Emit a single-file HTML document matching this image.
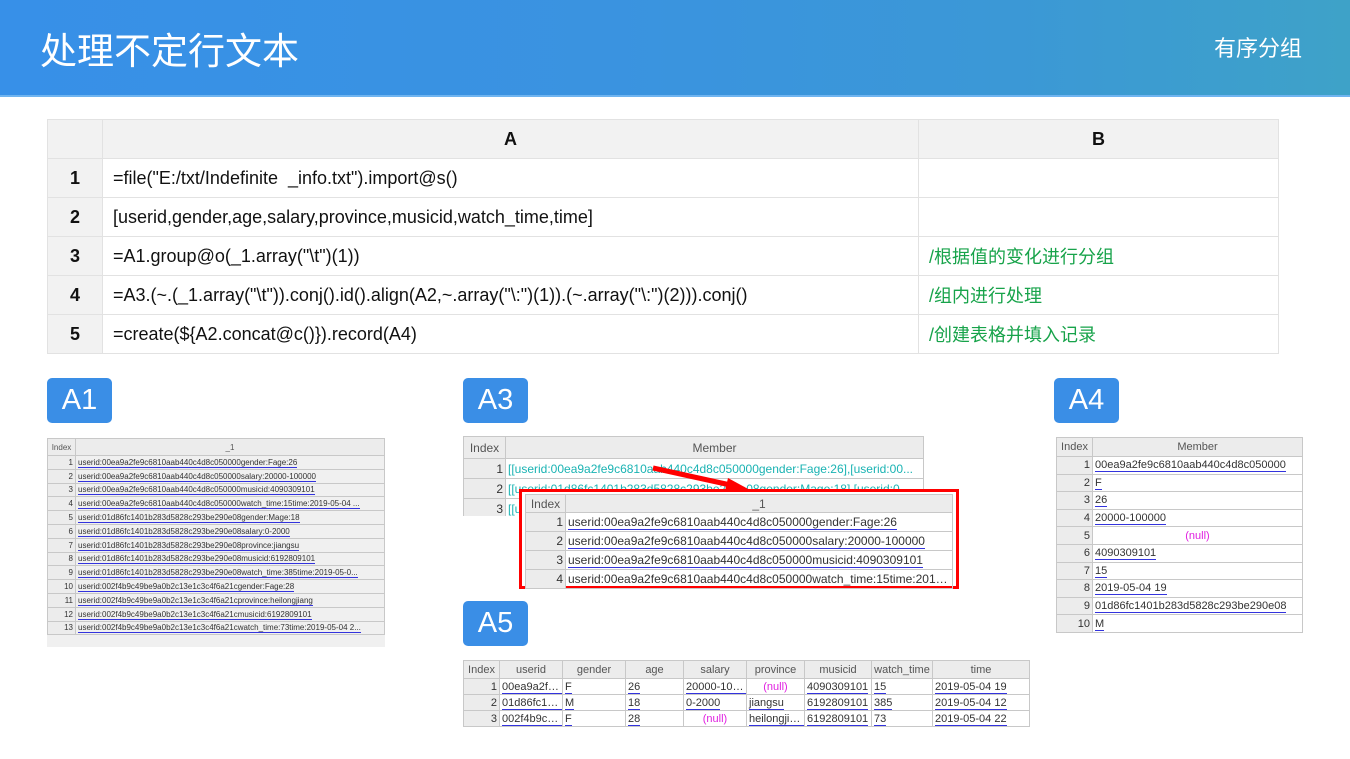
<!DOCTYPE html>
<html><head><meta charset="utf-8"><style>
*{margin:0;padding:0;box-sizing:border-box}
body{width:1350px;height:759px;background:#fff;position:relative;overflow:hidden;font-family:"Liberation Sans","Noto Sans CJK SC",sans-serif}
.hdr{position:absolute;left:0;top:0;width:1350px;height:97px;background:linear-gradient(90deg,#3790e8 0%,#3a93e0 45%,#3b98d6 75%,#3ea2c8 100%)}
.hdr .bar{position:absolute;left:0;bottom:0;width:100%;height:2px;background:#6fb4f0}
.t1{position:absolute;left:40px;top:21px;color:#fff;font-size:37px}
.t2{position:absolute;left:1214px;top:31px;color:#fff;font-size:22px}
table{border-collapse:collapse;position:absolute;table-layout:fixed}
.main td{border:1px solid #e2e2e2;height:39px;font-size:18px;color:#111;padding-left:10px}
.main td.i{background:#f2f2f2;text-align:center;font-weight:bold;padding:0}
.main tr.h td{background:#f2f2f2;text-align:center;font-weight:bold;padding:0}
.main td.c{color:#17a34a}
.lbl{position:absolute;width:65px;height:45px;background:#3a8ee6;border-radius:5px;color:#fff;font-size:29px;text-align:center;line-height:45px}
.g td{border:1px solid #c8c8c8;color:#333;white-space:nowrap;overflow:hidden;text-overflow:ellipsis;padding:0 2px}
.g tr.h td{background:#ececec;text-align:center;color:#555}
.g td.n{background:#ececec;text-align:right}
.g td u{text-decoration:none;border-bottom:1.5px solid #3333dd}
.g td.cy{color:#1ab3b3}
.g td.nl{color:#e020e0;text-align:center}
</style></head><body>
<div class="hdr"><div class="bar"></div></div>
<div class="t1">处理不定行文本</div>
<div class="t2">有序分组</div>

<table class="main" style="left:47px;top:119px;width:1231px">
<colgroup><col style="width:55px"><col style="width:816px"><col style="width:360px"></colgroup>
<tr class="h"><td></td><td>A</td><td>B</td></tr>
<tr><td class="i">1</td><td>=file("E:/txt/Indefinite &nbsp;_info.txt").import@s()</td><td></td></tr>
<tr><td class="i">2</td><td>[userid,gender,age,salary,province,musicid,watch_time,time]</td><td></td></tr>
<tr><td class="i">3</td><td>=A1.group@o(_1.array("\t")(1))</td><td class="c">/根据值的变化进行分组</td></tr>
<tr><td class="i">4</td><td>=A3.(~.(_1.array("\t")).conj().id().align(A2,~.array("\:")(1)).(~.array("\:")(2))).conj()</td><td class="c">/组内进行处理</td></tr>
<tr><td class="i">5</td><td>=create(${A2.concat@c()}).record(A4)</td><td class="c">/创建表格并填入记录</td></tr>
</table>

<div class="lbl" style="left:47px;top:378px">A1</div>
<div class="lbl" style="left:463px;top:378px">A3</div>
<div class="lbl" style="left:1054px;top:378px">A4</div>
<div class="lbl" style="left:463px;top:601px">A5</div>

<div style="position:absolute;left:47px;top:438px;width:338px;height:209px;background:#f0f0f0"></div>
<table class="g" style="left:47px;top:438px;width:338px;font-size:8px">
<colgroup><col style="width:28px"><col></colgroup>
<tr class="h" style="height:17px"><td>Index</td><td>_1</td></tr>
<tr style="height:13.8px"><td class="n">1</td><td><u>userid:00ea9a2fe9c6810aab440c4d8c050000gender:Fage:26</u></td></tr>
<tr style="height:13.8px"><td class="n">2</td><td><u>userid:00ea9a2fe9c6810aab440c4d8c050000salary:20000-100000</u></td></tr>
<tr style="height:13.8px"><td class="n">3</td><td><u>userid:00ea9a2fe9c6810aab440c4d8c050000musicid:4090309101</u></td></tr>
<tr style="height:13.8px"><td class="n">4</td><td><u>userid:00ea9a2fe9c6810aab440c4d8c050000watch_time:15time:2019-05-04 ...</u></td></tr>
<tr style="height:13.8px"><td class="n">5</td><td><u>userid:01d86fc1401b283d5828c293be290e08gender:Mage:18</u></td></tr>
<tr style="height:13.8px"><td class="n">6</td><td><u>userid:01d86fc1401b283d5828c293be290e08salary:0-2000</u></td></tr>
<tr style="height:13.8px"><td class="n">7</td><td><u>userid:01d86fc1401b283d5828c293be290e08province:jiangsu</u></td></tr>
<tr style="height:13.8px"><td class="n">8</td><td><u>userid:01d86fc1401b283d5828c293be290e08musicid:6192809101</u></td></tr>
<tr style="height:13.8px"><td class="n">9</td><td><u>userid:01d86fc1401b283d5828c293be290e08watch_time:385time:2019-05-0...</u></td></tr>
<tr style="height:13.8px"><td class="n">10</td><td><u>userid:002f4b9c49be9a0b2c13e1c3c4f6a21cgender:Fage:28</u></td></tr>
<tr style="height:13.8px"><td class="n">11</td><td><u>userid:002f4b9c49be9a0b2c13e1c3c4f6a21cprovince:heilongjiang</u></td></tr>
<tr style="height:13.8px"><td class="n">12</td><td><u>userid:002f4b9c49be9a0b2c13e1c3c4f6a21cmusicid:6192809101</u></td></tr>
<tr style="height:13.8px"><td class="n">13</td><td><u>userid:002f4b9c49be9a0b2c13e1c3c4f6a21cwatch_time:73time:2019-05-04 2...</u></td></tr>
</table>

<div style="position:absolute;left:463px;top:436px;width:461px;height:80px;overflow:hidden">
<table class="g" style="left:0;top:0;width:461px;font-size:12px">
<colgroup><col style="width:42px"><col></colgroup>
<tr class="h" style="height:22px"><td>Index</td><td>Member</td></tr>
<tr style="height:20px"><td class="n">1</td><td class="cy">[[userid:00ea9a2fe9c6810aab440c4d8c050000gender:Fage:26],[userid:00...</td></tr>
<tr style="height:20px"><td class="n">2</td><td class="cy">[[userid:01d86fc1401b283d5828c293be290e08gender:Mage:18],[userid:0...</td></tr>
<tr style="height:20px"><td class="n">3</td><td class="cy">[[userid:002f4b9c...</td></tr>
</table></div>
<svg style="position:absolute;left:0;top:0" width="1350" height="759"><line x1="653" y1="468" x2="735" y2="486" stroke="#f00" stroke-width="5"/><polygon points="750,490 728,478 724,495" fill="#f00"/></svg>
<div style="position:absolute;left:519px;top:489px;width:440px;height:100px;border:3px solid #f00;background:#fff">
<table class="g" style="left:3px;top:2px;width:428px;font-size:12px">
<colgroup><col style="width:40px"><col></colgroup>
<tr class="h" style="height:18px"><td>Index</td><td>_1</td></tr>
<tr style="height:19px"><td class="n">1</td><td><u>userid:00ea9a2fe9c6810aab440c4d8c050000gender:Fage:26</u></td></tr>
<tr style="height:19px"><td class="n">2</td><td><u>userid:00ea9a2fe9c6810aab440c4d8c050000salary:20000-100000</u></td></tr>
<tr style="height:19px"><td class="n">3</td><td><u>userid:00ea9a2fe9c6810aab440c4d8c050000musicid:4090309101</u></td></tr>
<tr style="height:19px"><td class="n">4</td><td>userid:00ea9a2fe9c6810aab440c4d8c050000watch_time:15time:2019-05...</td></tr>
</table></div>

<table class="g" style="left:1056px;top:437px;width:247px;font-size:11px">
<colgroup><col style="width:36px"><col></colgroup>
<tr class="h" style="height:19px"><td>Index</td><td>Member</td></tr>
<tr style="height:17.6px"><td class="n">1</td><td><u>00ea9a2fe9c6810aab440c4d8c050000</u></td></tr>
<tr style="height:17.6px"><td class="n">2</td><td><u>F</u></td></tr>
<tr style="height:17.6px"><td class="n">3</td><td><u>26</u></td></tr>
<tr style="height:17.6px"><td class="n">4</td><td><u>20000-100000</u></td></tr>
<tr style="height:17.6px"><td class="n">5</td><td class="nl">(null)</td></tr>
<tr style="height:17.6px"><td class="n">6</td><td><u>4090309101</u></td></tr>
<tr style="height:17.6px"><td class="n">7</td><td><u>15</u></td></tr>
<tr style="height:17.6px"><td class="n">8</td><td><u>2019-05-04 19</u></td></tr>
<tr style="height:17.6px"><td class="n">9</td><td><u>01d86fc1401b283d5828c293be290e08</u></td></tr>
<tr style="height:17.6px"><td class="n">10</td><td><u>M</u></td></tr>
</table>

<table class="g" style="left:463px;top:660px;width:567px;font-size:11px">
<colgroup><col style="width:36px"><col style="width:63px"><col style="width:63px"><col style="width:58px"><col style="width:63px"><col style="width:58px"><col style="width:67px"><col style="width:61px"><col></colgroup>
<tr class="h" style="height:18px"><td>Index</td><td>userid</td><td>gender</td><td>age</td><td>salary</td><td>province</td><td>musicid</td><td>watch_time</td><td>time</td></tr>
<tr style="height:16px"><td class="n">1</td><td><u>00ea9a2fe...</u></td><td><u>F</u></td><td><u>26</u></td><td><u>20000-100...</u></td><td class="nl">(null)</td><td><u>4090309101</u></td><td><u>15</u></td><td><u>2019-05-04 19</u></td></tr>
<tr style="height:16px"><td class="n">2</td><td><u>01d86fc14...</u></td><td><u>M</u></td><td><u>18</u></td><td><u>0-2000</u></td><td><u>jiangsu</u></td><td><u>6192809101</u></td><td><u>385</u></td><td><u>2019-05-04 12</u></td></tr>
<tr style="height:16px"><td class="n">3</td><td><u>002f4b9c4...</u></td><td><u>F</u></td><td><u>28</u></td><td class="nl">(null)</td><td><u>heilongjiang</u></td><td><u>6192809101</u></td><td><u>73</u></td><td><u>2019-05-04 22</u></td></tr>
</table>
</body></html>
